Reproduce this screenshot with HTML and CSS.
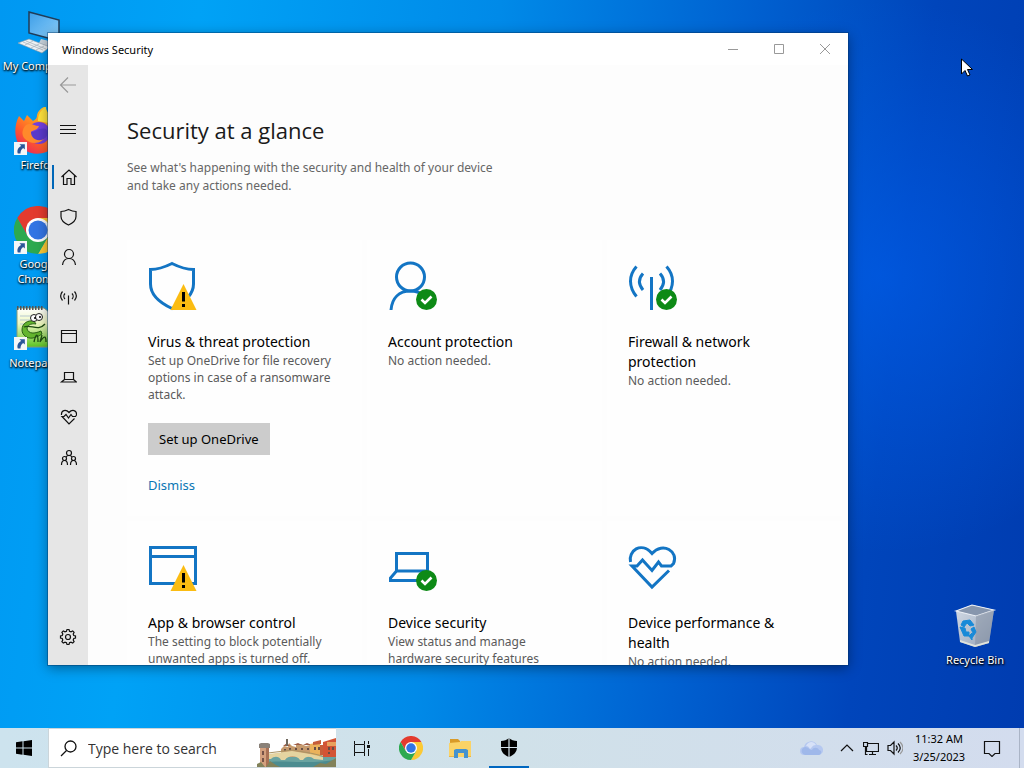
FILE: index.html
```html
<!DOCTYPE html>
<html lang="en">
<head>
    <meta charset="UTF-8">
    <meta name="viewport" content="width=device-width, initial-scale=1.0">
    <title>Windows Security</title>
    <link rel="stylesheet" href="styles.css">
</head>
<body>
    <svg class="defs" width="0" height="0" aria-hidden="true">
        <defs>
            <linearGradient id="screenFill" x1="0" y1="0" x2="1" y2="1">
                <stop offset="0" stop-color="#3d9ee8"/><stop offset="1" stop-color="#8ed0fa"/>
            </linearGradient>
            <linearGradient id="foxFill" x1="0.9" y1="0" x2="0.2" y2="1">
                <stop offset="0" stop-color="#ffe53c"/><stop offset="0.35" stop-color="#ffa21f"/>
                <stop offset="0.7" stop-color="#ff5c2b"/><stop offset="1" stop-color="#e8235f"/>
            </linearGradient>
            <linearGradient id="noteFill" x1="0" y1="0" x2="0" y2="1">
                <stop offset="0" stop-color="#ffffff"/><stop offset="0.4" stop-color="#eef8c0"/><stop offset="1" stop-color="#5cc423"/>
            </linearGradient>
            <linearGradient id="binFill" x1="0" y1="0" x2="1" y2="1">
                <stop offset="0" stop-color="#d3dbe6"/><stop offset="1" stop-color="#95a3b8"/>
            </linearGradient>
        </defs>
        <symbol id="shortcut" viewBox="0 0 12 12">
            <path d="M0 0h12v12H0z" fill="#f4f6f8"/>
            <path d="M5 2h5v5L8.400 5.500C6.500 7 6 8.500 6 10.500H3.500C2.500 7.500 4 5 6.700 3.700z" fill="#2a5699"/>
        </symbol>
        <symbol id="chrome" viewBox="0 0 48 48">
            <path d="M24 12h20.800A24 24 0 0 0 3.200 12l10.400 18z" fill="#e33b2e"/>
            <path d="M34.400 30L24 48A24 24 0 0 0 44.800 12H24z" fill="#fcc934"/>
            <path d="M13.600 30L3.200 12A24 24 0 0 0 24 48l10.400-18z" fill="#2da94f"/>
            <circle cx="24" cy="24" r="12" fill="#fff"/>
            <circle cx="24" cy="24" r="9.500" fill="#3275e4"/>
        </symbol>
        <symbol id="warning" viewBox="0 0 26 26">
            <path d="M13 0l13 26H0z" fill="#fbbc12" stroke="none"/>
            <path d="M11.500 8h3v9.500h-3zM11.500 20h3v3h-3z" fill="#000" stroke="none"/>
        </symbol>
        <symbol id="ok" viewBox="0 0 21 21">
            <circle cx="10.500" cy="10.500" r="10.500" fill="#0d8a16" stroke="none"/>
            <path d="M5.500 10.500l3.500 3.500 6.500-6.500" fill="none" stroke="#fff" stroke-width="2.600"/>
        </symbol>
    </svg>

    <div class="desktop">
        <a href="#" class="shortcut my-computer">
            <svg viewBox="0 0 48 48">
                <path d="M15 4l30 8v21l-30-8z" fill="url(#screenFill)" stroke="#203c58" stroke-width="1.500"/>
                <path d="M27 31l12 3 5 3-8 3-12-3z" fill="#c8d3dc"/>
                <path d="M15 31l21 8-8 6L4 35z" fill="#eef2f5" stroke="#8c9aa8" stroke-width="0.600"/>
                <path d="M12 33l20 8M9 34l20 8M19 33l-8 4M25 36l-8 4M30 38l-8 4" stroke="#a5b0ba" stroke-width="0.700"/>
            </svg>
            <span>My Computer</span>
        </a>
        <a href="#" class="shortcut firefox">
            <svg viewBox="0 0 48 48">
                <path d="M5 9l5 5 3-6 6 6c3-2 4-3 4-6 1-4 4-7 9-9-1 7 6 8 11 17 4 8 3 18-3 24-8 8-22 9-31 2C-1 34 0 18 5 9z" fill="url(#foxFill)"/>
                <path d="M24 14c0-7 3-11 8-14-1 7 6 8 11 17l1 5-9-6z" fill="#ffe23a"/>
                <circle cx="25" cy="26" r="11" fill="#7340de"/>
                <path d="M12 18c5-3 8 1 13 1-1 4-6 4-8 6 2 5 9 6 15 4-3 7-14 10-21 3-4-4-3-10 1-14z" fill="#ff892b"/>
                <path d="M17 25c5 0 8-5 15-3 3 4 1 10-5 11-6 1-10-3-10-8z" fill="#5a3acb"/>
                <use href="#shortcut" x="0" y="35" width="13" height="13"/>
            </svg>
            <span>Firefox</span>
        </a>
        <a href="#" class="shortcut google-chrome">
            <svg viewBox="0 0 48 48">
                <use href="#chrome" width="48" height="48"/>
                <use href="#shortcut" x="0" y="35" width="13" height="13"/>
            </svg>
            <span>Google Chrome</span>
        </a>
        <a href="#" class="shortcut notepad">
            <svg viewBox="0 0 48 48">
                <path d="M3 3h27l10 8v31H3z" fill="url(#noteFill)" stroke="#889b79"/>
                <path d="M3 3h27" stroke="#555" stroke-width="4" stroke-dasharray="1.500 1.500"/>
                <path d="M6 11h20M6 15h10M6 19h8" stroke="#b7c8d0"/>
                <path d="M8 25c0-7 6-10 12-9l2 3c-6-1-9 2-9 5 2 5 7 5 14 2l1 3c-4 3-7 3-9 4-6 1-11-3-11-8z" fill="#63b52e" stroke="#285f16"/>
                <circle cx="20" cy="13" r="3.500" fill="#fff" stroke="#222"/>
                <circle cx="25" cy="12" r="3.500" fill="#fff" stroke="#222"/>
                <circle cx="21" cy="13" r="1"/><circle cx="26" cy="12" r="1"/>
                <path d="M10 22c7-3 14 5 21-3M20 37c2-9 4-9 4 0M28 30l-2 7c5-8 6-5 6 0M35 29v8" fill="none" stroke="#1d4b13" stroke-width="1.300"/>
                <use href="#shortcut" x="0" y="32" width="13" height="13"/>
            </svg>
            <span>Notepad++</span>
        </a>
        <a href="#" class="shortcut recycle-bin">
            <svg viewBox="0 0 48 48">
                <path d="M5 9l16-6 22 5-5 33-14 4-15-5z" fill="url(#binFill)"/>
                <path d="M5 9l16-6 22 5-18 6z" fill="#8796ad" stroke="#edf1f7" stroke-width="1.200"/>
                <path d="M25 14l18-6-5 33-14 4z" fill="#7d8799" opacity="0.450"/>
                <path d="M9 38l15 5 14-4v2l-14 4-15-5z" fill="#e0e3dc"/>
                <path d="M12 19l7-1 4 5-4 1-3-3-3 4-3-2zM9 25l5 1 1 4h3v4h-5zM23 25l2 5-4 6v2l-3-4 3-3v2l1-2-2-4z" fill="#188ad8" stroke="#188ad8"/>
            </svg>
            <span>Recycle Bin</span>
        </a>

        <div class="window">
            <div class="title-bar">
                <span class="window-title">Windows Security</span>
                <div class="window-buttons">
                    <button aria-label="Minimize"><svg viewBox="0 0 12 12"><path d="M1 6.500h10"/></svg></button>
                    <button aria-label="Maximize"><svg viewBox="0 0 12 12"><path d="M1.500 1.500h9v9h-9z"/></svg></button>
                    <button aria-label="Close"><svg viewBox="0 0 12 12"><path d="M1 1l10 10M11 1L1 11"/></svg></button>
                </div>
            </div>
            <div class="window-body">
                <nav class="sidebar">
                    <button class="back" aria-label="Back"><svg viewBox="0 0 18 18"><path d="M17 9H1.500M9 1.500L1.500 9 9 16.500"/></svg></button>
                    <button class="menu" aria-label="Open navigation"><svg viewBox="0 0 18 18"><path d="M1 5.500h16M1 9.500h16M1 13.500h16"/></svg></button>
                    <button class="active" aria-label="Home"><svg viewBox="0 0 18 18"><path d="M2.500 9L10 2l7.500 7M4.500 7.500v9H8v-6h4v6h3.500v-9"/></svg></button>
                    <button aria-label="Virus &amp; threat protection"><svg viewBox="0 0 18 18"><path d="M2 3.500C5.500 3.500 7.500 2.500 9.500 1.500c2 1 4 2 7.500 2v5c0 4-3 6.500-7.500 8.500C5 15 2 12.500 2 8.500z"/></svg></button>
                    <button aria-label="Account protection"><svg viewBox="0 0 18 18"><circle cx="10" cy="6" r="4.500"/><path d="M3.500 17c.5-4 3-6.500 6.500-6.500s6 2.500 6.500 6.500"/></svg></button>
                    <button aria-label="Firewall &amp; network protection"><svg viewBox="0 0 18 18"><path d="M9.500 7.500v9M3.500 3.500c-2.500 3-2.500 6 0 9M15.500 3.500c2.500 3 2.500 6 0 9M6 5.500c-1.500 1.500-1.500 4 0 5.500M13 5.500c1.500 1.500 1.500 4 0 5.500"/></svg></button>
                    <button aria-label="App &amp; browser control"><svg viewBox="0 0 18 18"><path d="M2.500 2.500h15v12h-15zM2.500 5.500h15"/></svg></button>
                    <button aria-label="Device security"><svg viewBox="0 0 18 18"><path d="M5.500 4.500h9v7h-9zM5.500 11.500l-3 2.500h15l-3-2.500"/></svg></button>
                    <button aria-label="Device performance &amp; health"><svg viewBox="0 0 18 18"><path d="M2.500 7C2 2 7 1 10 4.500 13 1 18 2 17.500 7l-1 1.500h-3l-1.500-2L9.500 10 7 6.500l-2 2H3L10 16l5.500-5.500"/></svg></button>
                    <button aria-label="Family options"><svg viewBox="0 0 18 18"><circle cx="10" cy="5" r="2.500"/><circle cx="5.500" cy="10.500" r="2"/><circle cx="14.500" cy="10.500" r="2"/><path d="M7 9c1-2 5-2 6 0M2.500 17c0-6 6-6 6 0M11.500 17c0-6 6-6 6 0"/></svg></button>
                    <button class="settings" aria-label="Settings"><svg viewBox="0 0 18 18"><path d="M7.500 3.200L8 1.500h2l.5 1.700 1.500.6 1.700-.9 1.400 1.400-.9 1.700.6 1.500 1.700.5v2l-1.700.5-.6 1.500.9 1.700-1.400 1.400-1.700-.9-1.500.6-.5 1.700H8l-.5-1.700-1.500-.6-1.700.9-1.400-1.400.9-1.700-.6-1.500L1.500 10V8l1.700-.5.6-1.500-.9-1.700 1.400-1.400 1.700.9z"/><circle cx="9" cy="9" r="2.500"/></svg></button>
                </nav>
                <main class="content">
                    <h1>Security at a glance</h1>
                    <p class="intro">See what's happening with the security and health of your device and take any actions needed.</p>
                    <div class="cards">
                        <section class="card">
                            <svg class="card-icon" viewBox="0 0 50 50">
                                <path d="M2.500 8.500C11 8.500 17 6 24 2.500 31 6 37 8.500 45.500 8.500V23c0 10-8 18-21.500 24.500C10 41 2.500 33 2.500 23z"/>
                                <use href="#warning" x="22" y="23" width="27" height="26"/>
                            </svg>
                            <h2>Virus &amp; threat protection</h2>
                            <p>Set up OneDrive for file recovery options in case of a ransomware attack.</p>
                            <button class="setup">Set up OneDrive</button>
                            <a class="dismiss" href="#">Dismiss</a>
                        </section>
                        <section class="card">
                            <svg class="card-icon" viewBox="0 0 50 50">
                                <circle cx="22.500" cy="16" r="14"/>
                                <path d="M3 49c1-12 8-19 19.500-19 5 0 9 1 12 4"/>
                                <use href="#ok" x="28" y="28" width="21" height="21"/>
                            </svg>
                            <h2>Account protection</h2>
                            <p>No action needed.</p>
                        </section>
                        <section class="card">
                            <svg class="card-icon" viewBox="0 0 50 50">
                                <path d="M23.500 16v33M8.500 5.500c-8 9-8 20 0 30M15 12.500c-4.500 5-4.500 11 0 16.500M38.500 5.500c8 9 8 20 0 30M32 12.500c4.500 5 4.500 11 0 16.500"/>
                                <use href="#ok" x="28" y="28" width="21" height="21"/>
                            </svg>
                            <h2>Firewall &amp; network protection</h2>
                            <p>No action needed.</p>
                        </section>
                        <section class="card">
                            <svg class="card-icon" viewBox="0 0 50 50">
                                <path d="M2.500 5.500h45v36h-45zM2.500 14.500h45"/>
                                <use href="#warning" x="22" y="23" width="27" height="26"/>
                            </svg>
                            <h2>App &amp; browser control</h2>
                            <p>The setting to block potentially unwanted apps is turned off.</p>
                        </section>
                        <section class="card">
                            <svg class="card-icon" viewBox="0 0 50 50">
                                <path d="M8.500 11.500h31V29h-31zM8.500 29l-6 7v2.500h28M39.500 29l4 4"/>
                                <use href="#ok" x="28" y="28" width="21" height="21"/>
                            </svg>
                            <h2>Device security</h2>
                            <p>View status and manage hardware security features</p>
                        </section>
                        <section class="card">
                            <svg class="card-icon" viewBox="0 0 50 50">
                                <path d="M2.500 20C0 9 13-1 24 11.500 35-1 51 10 45.500 21.500L43 24H33.500l-3-4L24 28.500 14.500 18l-5.500 6H4L24 45l17-16.500"/>
                            </svg>
                            <h2>Device performance &amp; health</h2>
                            <p>No action needed.</p>
                        </section>
                    </div>
                </main>
            </div>
        </div>

        <svg class="cursor" viewBox="0 0 12 19" aria-hidden="true">
            <path d="M.5 1v15l3.500-3.500L6.500 18l2.500-1-2.500-5.500h5z" fill="#fff" stroke="#000"/>
        </svg>
    </div>

    <footer class="taskbar">
        <button class="start" aria-label="Start">
            <svg viewBox="0 0 16 16"><path d="M0 2.300l6.500-1v6.200H0zM7.500 1.200L16 0v7.500H7.500zM0 8.500h6.500v6.200l-6.500-1zM7.500 8.500H16V16l-8.500-1.200z"/></svg>
        </button>
        <label class="search">
            <svg class="lens" viewBox="0 0 17 17"><circle cx="10.500" cy="6.500" r="5.500"/><path d="M6.500 10.500L1 16"/></svg>
            <input type="text" placeholder="Type here to search" aria-label="Type here to search">
            <svg class="highlight" viewBox="0 0 79 38">
                <path d="M9 27h70v11H9z" fill="#6aa3a0"/>
                <path d="M9 34c15-4 30 2 70-3v7H9z" fill="#4c8c90"/>
                <path d="M24 20l3-3 4 1 1-4 3 3 4 1v-2l5-1 5 2 4-1 6 1 2 5 1 6H24z" fill="#c69a6e"/>
                <path d="M26 17l4-3 3 3zM36 16l5-2 4 2zM46 16l4-2 5 2z" fill="#9e5d46"/>
                <path d="M29 10h2v7h-2z" fill="#6e675c"/>
                <path d="M53 15l10-2v14H53z" fill="#ebb25b"/>
                <path d="M56 13l8-2v4l-8 1zM63 16h6v10h-6z" fill="#c65e39"/>
                <path d="M66 13l13-4v19H66z" fill="#d35435"/>
                <path d="M70 13h9v4h-9z" fill="#e9a15c"/>
                <path d="M27 20h2v2h-2zM32 19h2v2h-2zM38 19h2v2h-2zM44 19h2v2h-2zM50 19h2v2h-2zM57 18h2v3h-2zM61 18h2v3h-2zM71 18h2v3h-2zM75 18h2v3h-2zM71 23h2v2h-2z" fill="#684e45"/>
                <path d="M11 25l24-3 18 3 13 3v3l-9-1c-4-3-8-3-11 1h-3c-3-5-12-5-15 0h-4c-2-4-7-4-10-1h-3z" fill="#e5d4a0"/>
                <path d="M11 24l24-3 18 3 13 3" fill="none" stroke="#aa9363"/>
                <path d="M3 18h9v20H3z" fill="#d3a07e"/>
                <path d="M9 18h3v20H9z" fill="#a97155"/>
                <path d="M2 15l2-1h7l2 1v4H2z" fill="#8a8178"/>
                <path d="M5 22h2v4H5zM5 29h2v4H5z" fill="#765348"/>
                <path d="M0 38v-3l4-2 4 5zM9 38l4-6 6 4 4 2zM56 38l7-4 6 1 10-6v9z" fill="#82825a"/>
            </svg>
        </label>
        <div class="apps">
            <button aria-label="Task View">
                <svg class="task-view" viewBox="0 0 17 17"><path d="M1.500 4.500h10v8h-10zM1.500 1v3M11.500 1v3M1.500 12.500V16M11.500 12.500V16M15.500 1v3M15.500 9v7"/><path d="M14 5h3v3h-3z" class="solid"/></svg>
            </button>
            <button aria-label="Google Chrome"><svg class="app-icon" viewBox="0 0 24 24"><use href="#chrome" width="24" height="24"/></svg></button>
            <button aria-label="File Explorer">
                <svg class="app-icon" viewBox="0 0 24 24">
                    <path d="M2 3h8l2 2v4H2z" fill="#d99b28"/>
                    <path d="M1 7l11-1 1-1h10v16H1z" fill="#fbd367"/>
                    <path d="M6 14l2-1h10l2 1v8h-4v-5h-6v5H6z" fill="#4693cf"/>
                    <path d="M1 20h5v1H1zM20 20h3v1h-3z" fill="#e9b647"/>
                </svg>
            </button>
            <button class="running" aria-label="Windows Security">
                <svg class="app-icon" viewBox="0 0 24 24">
                    <path d="M4 5c3 0 6-1 8-3 2 2 5 3 8 3v6c0 5-3 8-8 10-5-2-8-5-8-10z"/>
                    <path d="M12 2v19M4 11.500h16" stroke="#d3e1ea" stroke-width="1.200"/>
                </svg>
            </button>
        </div>
        <div class="tray">
            <button class="weather" aria-label="Weather">
                <svg viewBox="0 0 24 18">
                    <path d="M5 16a4 4 0 0 1 0-8 7 7 0 0 1 13-2 5 5 0 0 1 2 10z" fill="#b5c8f0"/>
                    <path d="M4 15a4 4 0 0 1 2-7c4 0 4 3 7 3 1-3 6-3 7 0 3 0 3 4 0 5H6z" fill="#9fb8ea"/>
                    <path d="M7 7c2-5 8-5 10-1-4 0-4 3-6 4-1-2-2-3-4-3z" fill="#d7e1f7"/>
                </svg>
            </button>
            <button class="small" aria-label="Show hidden icons"><svg viewBox="0 0 16 16"><path d="M2 11l6-6 6 6"/></svg></button>
            <button class="small" aria-label="Network"><svg viewBox="0 0 16 16"><path d="M5 3.500h10.500v8H3.500V7M9.500 11.500v3M6 14.500h7M.5 2.500h4v4h-4zM2.500 6.500v8h2"/></svg></button>
            <button class="small" aria-label="Volume"><svg viewBox="0 0 16 16"><path d="M1 5.500h2.500L7 2v12l-3.500-3.500H1zM9 5.500c1.500 1.500 1.500 3.500 0 5M11 3.500c3 3 3 6 0 9"/><path d="M13 2c4 4 4 8 0 12" class="faint"/></svg></button>
            <button class="clock"><span>11:32 AM</span><span>3/25/2023</span></button>
            <button class="notifications" aria-label="Notifications"><svg viewBox="0 0 18 18"><path d="M1.500 2.500h15v12H12l-3 3-3-3H1.500z"/></svg></button>
            <button class="show-desktop" aria-label="Show desktop"></button>
        </div>
    </footer>
</body>
</html>
```
FILE: styles.css
```css
* {
    box-sizing: border-box;
}

body {
    margin: 0;
    height: 100vh;
    display: flex;
    flex-direction: column;
    overflow: hidden;
    font-family: "Noto Sans", "Open Sans", sans-serif;
    font-size: 12px;
    color: #000;
}

button {
    display: flex;
    align-items: center;
    justify-content: center;
    padding: 0;
    border: none;
    background: none;
    color: inherit;
    font: inherit;
}

a {
    text-decoration: none;
}

h1, h2, p {
    margin: 0;
    font-weight: normal;
}

.defs {
    position: absolute;
}

/* Desktop */
.desktop {
    position: relative;
    flex: 1;
    overflow: hidden;
    background:
        radial-gradient(circle at 86% 38%, rgba(0, 96, 240, 0.6), rgba(0, 80, 220, 0) 28%),
        linear-gradient(97deg, #0098f2 0%, #00a2f6 18%, #008ae8 45%, #0060d0 68%, #0045bb 84%, #003cb0 100%);
}

.shortcut {
    position: absolute;
    left: 0;
    width: 76px;
    display: flex;
    flex-direction: column;
    align-items: center;
    gap: 2px;
    padding-top: 8px;
    color: #fff;
    font-size: 11px;
    line-height: 15px;
    text-align: center;
    text-shadow: 1px 1px 2px #000, 0 1px 2px #000;
}

.shortcut svg {
    width: 48px;
    height: 48px;
}

.my-computer {
    top: 0;
}

.firefox {
    top: 99px;
}

.google-chrome {
    top: 198px;
}

.google-chrome span {
    width: 48px;
}

.notepad {
    top: 297px;
}

.recycle-bin {
    top: 594px;
    left: auto;
    right: 11px;
}

.cursor {
    position: absolute;
    top: 58px;
    left: 961px;
    width: 12px;
    height: 19px;
}

/* Window */
.window {
    position: absolute;
    top: 33px;
    right: 176px;
    bottom: 63px;
    left: 48px;
    display: flex;
    flex-direction: column;
    background: #fdfdfd;
    box-shadow: 0 0 0 1px rgba(0, 50, 100, 0.4), 0 3px 12px rgba(0, 0, 0, 0.4);
}

.title-bar {
    display: flex;
    align-items: center;
    justify-content: space-between;
    height: 32px;
    padding-left: 14px;
    background: #fff;
    font-size: 11px;
}

.window-buttons {
    display: flex;
}

.window-buttons button {
    width: 46px;
    height: 32px;
}

.window-buttons svg {
    width: 12px;
    height: 12px;
    fill: none;
    stroke: #999;
}

.window-body {
    flex: 1;
    display: flex;
    min-height: 0;
}

.sidebar {
    flex: none;
    width: 40px;
    display: flex;
    flex-direction: column;
    padding-bottom: 8px;
    background: #e6e6e6;
}

.sidebar button {
    width: 40px;
    height: 40px;
}

.sidebar svg {
    width: 18px;
    height: 18px;
    fill: none;
    stroke: #111;
    stroke-width: 1.2;
}

.sidebar .back svg {
    stroke: #999;
}

.sidebar .menu {
    margin: 4px 0 8px;
}

.sidebar .active {
    background: linear-gradient(#0067b8, #0067b8) 4px center / 2px 24px no-repeat;
}

.sidebar .settings {
    margin-top: auto;
}

.content {
    flex: 1;
    min-width: 0;
    overflow: hidden;
    padding: 49px 6px 0 39px;
}

.content h1 {
    color: #1a1a1a;
    font-family: "Open Sans", "Noto Sans", sans-serif;
    font-size: 22px;
    line-height: 32px;
}

.intro {
    max-width: 380px;
    margin-top: 13px;
    color: #666;
    font-size: 12px;
    line-height: 18px;
}

.cards {
    display: grid;
    grid-template-columns: repeat(3, 1fr);
    grid-auto-rows: minmax(276px, auto);
    gap: 5px;
    margin-top: 45px;
}

.card {
    display: flex;
    flex-direction: column;
    align-items: flex-start;
    padding: 21px 24px 20px 21px;
    background: #fefefe;
}

.card-icon {
    width: 50px;
    height: 50px;
    margin-bottom: 21px;
    fill: none;
    stroke: #1375c4;
    stroke-width: 3;
}

.card h2 {
    font-size: 14px;
    line-height: 20px;
}

.card p {
    color: #5a5a5a;
    font-size: 12px;
    line-height: 17px;
}

.setup {
    height: 32px;
    margin-top: 20px;
    padding: 0 11px;
    background: #ccc;
    font-size: 13px;
}

.dismiss {
    margin-top: 20px;
    color: #0a76b4;
    font-size: 13px;
    line-height: 20px;
}

/* Taskbar */
.taskbar {
    flex: none;
    display: flex;
    height: 40px;
    background: linear-gradient(90deg, #cde3ee, #d0e1e9 50%, #d3dcee);
}

.start {
    width: 48px;
}

.start svg {
    width: 16px;
    height: 16px;
}

.search {
    display: flex;
    align-items: center;
    width: 288px;
    padding-left: 11px;
    border: 1px solid #cbd5da;
    border-right: none;
    background: #fff;
}

.lens {
    flex: none;
    width: 17px;
    height: 17px;
    fill: none;
    stroke: #111;
    stroke-width: 1.3;
}

.search input {
    flex: 1;
    min-width: 0;
    padding: 0 0 0 11px;
    border: none;
    outline: none;
    background: none;
    font-family: "Open Sans", "Noto Sans", sans-serif;
    font-size: 14px;
}

.search input::placeholder {
    color: #333;
    opacity: 1;
}

.highlight {
    flex: none;
    width: 79px;
    height: 38px;
}

.apps {
    display: flex;
    padding-left: 1px;
}

.apps button {
    width: 49px;
}

.app-icon {
    width: 24px;
    height: 24px;
}

.task-view {
    width: 17px;
    height: 17px;
    fill: none;
    stroke: #111;
    stroke-width: 1;
}

.task-view .solid {
    fill: #111;
    stroke: none;
}

.running {
    background: linear-gradient(#0067c0, #0067c0) center bottom / 40px 2px no-repeat;
}

.tray {
    display: flex;
    margin-left: auto;
}

.tray svg {
    fill: none;
    stroke: #111;
    stroke-width: 1.2;
}

.tray .weather {
    width: 48px;
}

.tray .weather svg {
    width: 24px;
    height: 18px;
    stroke: none;
}

.tray .small {
    width: 24px;
}

.small svg {
    width: 16px;
    height: 16px;
}

.small .faint {
    stroke: #999;
}

.tray .clock {
    flex-direction: column;
    width: 64px;
    font-size: 11px;
    line-height: 18px;
}

.tray .notifications {
    width: 42px;
}

.notifications svg {
    width: 18px;
    height: 18px;
}

.tray .show-desktop {
    width: 5px;
    margin-left: 6px;
    border-left: 1px solid #aab4c6;
}
```
